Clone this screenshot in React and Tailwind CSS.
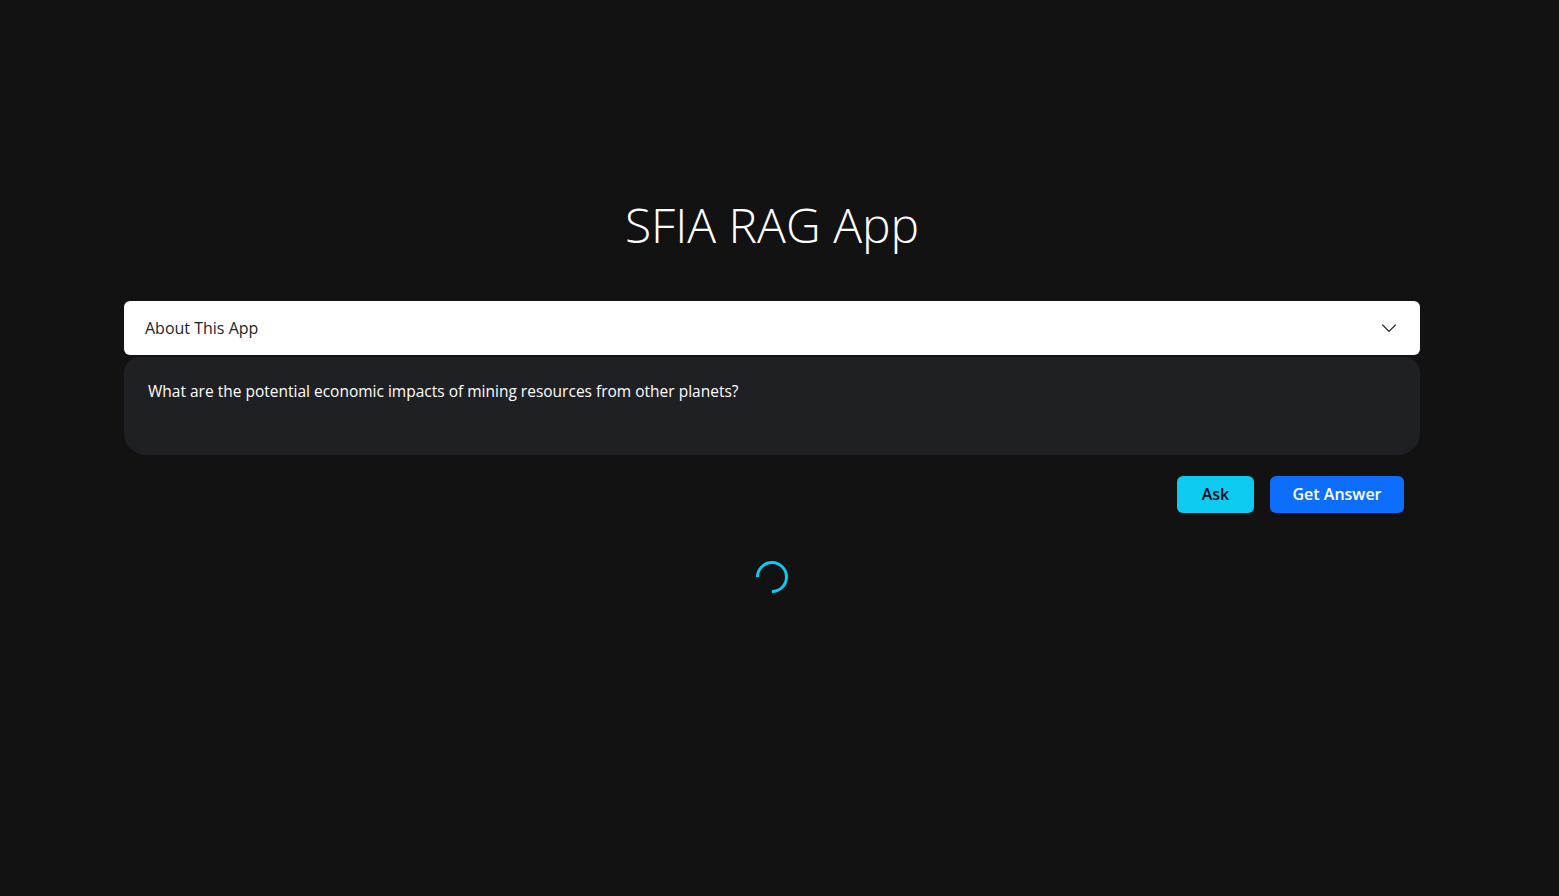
import React from "react";

export default function App() {
  const font = { fontFamily: '"Open Sans", "Noto Sans", sans-serif' };
  return (
    <div className="min-h-[896px] w-full bg-[#121212] pr-[15px]" style={font}>
      <div className="mx-auto max-w-[1320px] px-3 pt-[196px]">
        <h1 className="text-center text-[48px] font-light leading-[1.2] text-white">SFIA RAG App</h1>
        <div className="mt-[47px] flex flex-col gap-[2px]">
          <div className="flex h-[54px] items-center justify-between rounded-[6px] bg-white pl-[21px] pr-[22px]">
            <span className="text-[16px] text-[#212529]">About This App</span>
            <svg width="18" height="18" viewBox="0 0 16 16" fill="none" stroke="#212529" strokeWidth="1.2">
              <path d="M2 5l6 6 6-6" />
            </svg>
          </div>
          <div className="h-[98px] rounded-[16px] rounded-b-[22px] bg-[#1f2024] px-6 pt-[22px]">
            <p className="text-[15.5px] font-medium leading-[24px] text-white">
              What are the potential economic impacts of mining resources from other planets?
            </p>
          </div>
        </div>
        <div className="mt-[21px] flex justify-end gap-4 pr-4">
          <button className="h-[37px] w-[77px] rounded-[6px] bg-[#0dcaf0] text-[16px] font-semibold text-[#0a0a1a]">Ask</button>
          <button className="h-[37px] w-[134px] rounded-[6px] bg-[#0d6efd] text-[16px] font-semibold text-white">Get Answer</button>
        </div>
        <div className="mt-[48px] flex justify-center">
          <div className="h-[32px] w-[32px] -rotate-45 rounded-full border-[3px] border-[#0dcaf0] border-l-transparent" />
        </div>
      </div>
    </div>
  );
}
